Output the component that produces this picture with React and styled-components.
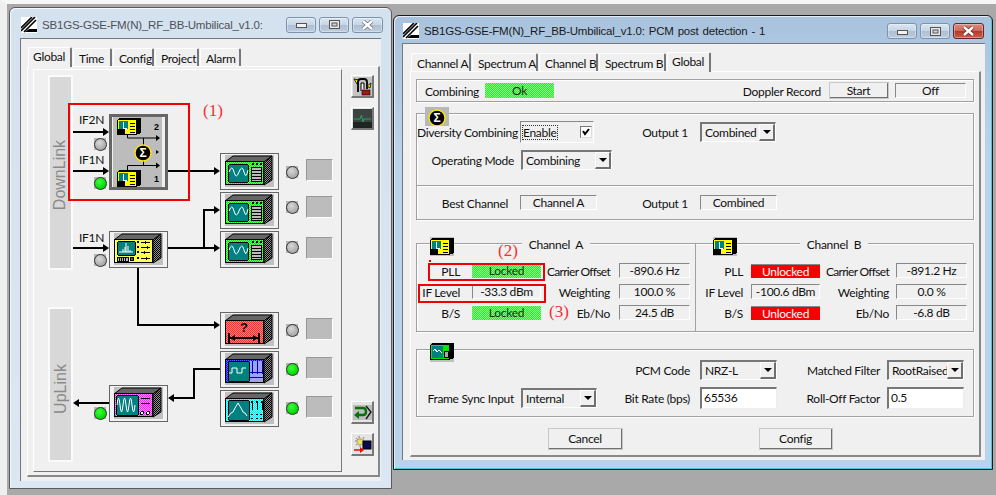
import React from 'react'
import styled, { createGlobalStyle } from 'styled-components'

const GlobalStyle = createGlobalStyle`
  html, body {
    margin: 0;
    padding: 0;
    background: #a9a9a9;
  }
  * {
    box-sizing: border-box;
  }
`

const Desktop = styled.div`
  position: relative;
  width: 996px;
  height: 495px;
  overflow: hidden;
  background: #a9a9a9;
  border-top: 4px solid #f6f6f6;
  border-left: 7px solid #efefef;
  font-family: Lato, 'Liberation Sans', Arial, sans-serif;
  font-size: 12px;
  letter-spacing: -0.3px;
  color: #111;
`

const Window = styled.div`
  position: absolute;
  left: ${p => p.$x - 7}px;
  top: ${p => p.$y - 4}px;
  width: ${p => p.$w}px;
  height: ${p => p.$h}px;
  display: flex;
  flex-direction: column;
  border: 1px solid ${p => (p.$active ? '#1c1c1c' : '#5a5a5a')};
  border-radius: 6px 6px 0 0;
  background: ${p => (p.$active ? 'linear-gradient(#a9c3de, #b9d3ec 30%, #b9d3ec)' : 'linear-gradient(#d4e1ee, #dbe7f3)')};
  box-shadow: ${p => (p.$active ? 'inset 1px 1px 0 #e3eef8, inset -1px -1px 0 #4fc1cf' : 'inset 1px 1px 0 #f4f8fc')};
`

const TitleBar = styled.div`
  display: flex;
  align-items: center;
  height: ${p => p.$h}px;
  padding: ${p => p.$pad};
  flex: none;
`

const TitleText = styled.span`
  margin-left: 5px;
  font-family: 'Liberation Sans', Arial, sans-serif;
  font-size: 11.5px;
  letter-spacing: -0.2px;
  word-spacing: 1px;
  white-space: nowrap;
  color: ${p => (p.$active ? '#1a1a1a' : '#4d5258')};
`

const Controls = styled.div`
  display: flex;
  gap: 3px;
  margin-left: auto;
`

const WinButton = styled.div`
  display: flex;
  align-items: center;
  justify-content: center;
  width: ${p => p.$w}px;
  height: 16px;
  border: 1px solid ${p => (p.$close ? '#5c2a2a' : '#7d93ab')};
  border-radius: 3px;
  background: ${p => (p.$close ? 'linear-gradient(#d98a7e, #cf6a5a 48%, #b23a28 52%, #c8604a)' : 'linear-gradient(#dbe6f1, #c6d6e6 48%, #aebfd2 52%, #bccde0)')};
  box-shadow: inset 0 0 0 1px rgba(255, 255, 255, 0.35);
`

const Client = styled.div`
  width: ${p => p.$w}px;
  height: ${p => p.$h}px;
  margin-left: ${p => p.$left}px;
  padding-top: 8px;
  flex: none;
  background: #f0f0f0;
  border-top: 1px solid #777;
  border-left: 1px solid #777;
`

const TabRow = styled.div`
  display: flex;
  align-items: flex-end;
  gap: 1px;
  padding-left: ${p => p.$left}px;
  position: relative;
  z-index: 1;
`

const Tab = styled.div`
  width: ${p => p.$w}px;
  height: ${p => (p.$active ? 20 : 18)}px;
  margin-bottom: ${p => (p.$active ? -1 : 0)}px;
  padding: ${p => (p.$active ? '1px 0 0 4px' : '2px 0 0 5px')};
  background: #f0f0f0;
  border-top: 1px solid #fff;
  border-left: 1px solid #fff;
  border-right: 2px solid #777;
  border-radius: 2px 2px 0 0;
  white-space: nowrap;
`

const Sheet = styled.div`
  width: ${p => p.$w}px;
  height: ${p => p.$h}px;
  margin-left: ${p => p.$left}px;
  border-top: 1px solid #fff;
  border-left: 1px solid #fff;
  border-right: 2px solid #888;
  border-bottom: 2px solid #888;
`

const GlobalSheet = styled(Sheet)`
  display: flex;
  padding: 2px 0 3px 5px;
`

const Canvas = styled.div`
  position: relative;
  width: 309px;
  height: 403px;
  flex: none;
  border-top: 1px solid #fff;
  border-left: 1px solid #fff;
  border-right: 1px solid #777;
  border-bottom: 1px solid #777;
`

const SideColumn = styled.div`
  display: flex;
  flex-direction: column;
  gap: 9px;
  margin-left: 9px;
  padding: 6px 0 16px;
`

const SideButton = styled.div`
  display: flex;
  align-items: center;
  justify-content: center;
  width: 23px;
  height: 23px;
  margin-top: ${p => (p.$push ? 'auto' : '0')};
  background: #e4e4e4;
  border-top: 1px solid #fff;
  border-left: 1px solid #fff;
  border-right: 2px solid #777;
  border-bottom: 2px solid #777;
`

const LinkBar = styled.div`
  position: absolute;
  left: 14px;
  top: ${p => p.$y - 70}px;
  width: 25px;
  height: ${p => p.$h}px;
  display: flex;
  align-items: center;
  justify-content: center;
  padding-top: ${p => p.$shift}px;
  background: #d8d8d8;
  border: 2px solid #fbfbfb;
  color: #8a8a8a;
  font-family: 'Liberation Sans', Arial, sans-serif;
  font-size: 16px;
  letter-spacing: 0;
`

const LinkLabel = styled.span`
  display: block;
  transform: rotate(-90deg);
  white-space: nowrap;
`

const PlacedLabel = styled.span`
  position: absolute;
  left: ${p => p.$x - 34}px;
  top: ${p => p.$y - 70}px;
  font-size: 12px;
  line-height: 14px;
  color: #111;
`

const Led = styled.div`
  position: absolute;
  left: ${p => p.$x - 34 - 6}px;
  top: ${p => p.$y - 70 - 6}px;
  width: 12px;
  height: 12px;
  background: #b4b4b4;
  &::after {
    content: '';
    display: block;
    width: 11px;
    height: 11px;
    border-radius: 50%;
    border: 1px solid #333;
    background: ${p => (p.$on ? 'radial-gradient(circle at 40% 35%, #3cff3c, #00d800 70%)' : 'radial-gradient(circle at 40% 35%, #d8d8d8, #a4a4a4 75%)')};
  }
`

const ReadoutBox = styled.div`
  position: absolute;
  left: 272px;
  top: ${p => p.$y - 70}px;
  width: 27px;
  height: 22px;
  background: #bcbcbc;
  border-top: 1px solid #999;
  border-left: 1px solid #999;
  border-right: 1px solid #fff;
  border-bottom: 1px solid #fff;
`

const Node = styled.div`
  position: absolute;
  left: ${p => p.$x - 34}px;
  top: ${p => p.$y - 70}px;
  width: 59px;
  height: 37px;
  display: flex;
  align-items: flex-start;
  justify-content: center;
  padding-top: 1px;
  background: #f2f2f2;
  border: 1px solid #666;
`

const CombinerNode = styled(Node)`
  height: 76px;
  padding-top: 0;
  border: 3px solid #666;
`

const Wires = styled.svg`
  position: absolute;
  left: 0;
  top: 0;
`

const RedBox = styled.div`
  position: absolute;
  left: ${p => p.$x}px;
  top: ${p => p.$y}px;
  width: ${p => p.$w}px;
  height: ${p => p.$h}px;
  border: 2px solid #f00000;
  pointer-events: none;
`

const RedNote = styled.span`
  position: absolute;
  left: ${p => p.$x}px;
  top: ${p => p.$y}px;
  font-family: 'Liberation Serif', 'Times New Roman', serif;
  font-size: 17px;
  line-height: 19px;
  letter-spacing: 0;
  color: #f03030;
`

const RedDot = styled.div`
  position: absolute;
  left: 422px;
  top: 256px;
  width: 2px;
  height: 2px;
  background: #f00000;
`

const DialogSheet = styled(Sheet)`
  padding: 7px 0 0 5px;
`

const Group = styled.div`
  position: relative;
  width: 558px;
  margin-bottom: ${p => p.$mb}px;
  border: 1px solid #a0a0a0;
  box-shadow: 1px 1px 0 #fff, inset 1px 1px 0 #fff;
`

const StatusGroup = styled(Group)`
  display: flex;
  align-items: center;
  height: 23px;
  padding-left: 8px;
`

const Section = styled.div`
  display: flex;
  flex-direction: column;
  gap: ${p => p.$gap || 0}px;
  height: ${p => p.$h}px;
  padding-top: ${p => p.$top}px;
  border-top: ${p => (p.$rule ? '1px solid #a0a0a0' : 'none')};
  box-shadow: ${p => (p.$rule ? 'inset 0 1px 0 #fff' : 'none')};
`

const Row = styled.div`
  display: flex;
  align-items: center;
  height: ${p => p.$h}px;
`

const Label = styled.span`
  flex: none;
  width: ${p => p.$w}px;
  margin-right: ${p => p.$mr}px;
  margin-top: 1px;
  text-align: right;
  white-space: nowrap;
  letter-spacing: ${p => (p.$tight ? '-0.7px' : 'inherit')};
`

const Field = styled.div`
  flex: none;
  width: ${p => p.$w}px;
  height: ${p => p.$h || 15}px;
  margin-left: ${p => p.$left || 0}px;
  display: flex;
  align-items: center;
  justify-content: center;
  white-space: nowrap;
  background: #f0f0f0;
  border-top: 1px solid #888;
  border-left: 1px solid #888;
  border-right: 1px solid #fff;
  border-bottom: 1px solid #fff;
`

const LockField = styled(Field)`
  border: none;
  background: repeating-conic-gradient(#20f020 0 25%, #90f890 0 50%) 0 0 / 2px 2px;
  color: #1c2c1c;
`

const AlarmField = styled(Field)`
  border: none;
  border-top: 1px solid #888;
  background: #f80000;
  color: #fff;
`

const Raised = styled.div`
  flex: none;
  display: flex;
  align-items: center;
  justify-content: center;
  width: ${p => p.$w}px;
  height: ${p => p.$h}px;
  background: #f0f0f0;
  border-top: 1px solid #fff;
  border-left: 1px solid #fff;
  border-right: 2px solid #707070;
  border-bottom: 2px solid #707070;
  outline: 1px solid #c8c8c8;
  outline-offset: -1px;
`

const CheckField = styled.div`
  flex: none;
  display: flex;
  align-items: center;
  justify-content: space-between;
  width: 74px;
  height: 22px;
  margin-left: -1px;
  padding: 0 1px 0 2px;
  border-top: 1px solid #888;
  border-left: 1px solid #888;
  border-right: 1px solid #fff;
  border-bottom: 1px solid #fff;
`

const FocusText = styled.span`
  outline: 1px dotted #333;
  line-height: 13px;
`

const CheckBox = styled.div`
  display: flex;
  align-items: center;
  justify-content: center;
  width: 12px;
  height: 12px;
  background: #fff;
  border-top: 1px solid #777;
  border-left: 1px solid #777;
  border-right: 1px solid #ddd;
  border-bottom: 1px solid #ddd;
`

const SelectBox = styled.div`
  flex: none;
  display: flex;
  align-items: center;
  justify-content: space-between;
  width: ${p => p.$w}px;
  height: 20px;
  padding-left: 3px;
  background: #f0f0f0;
  border-top: 2px solid #777;
  border-left: 2px solid #777;
  border-right: 1px solid #fff;
  border-bottom: 1px solid #fff;
  white-space: nowrap;
  overflow: hidden;
`

const SelectValue = styled.span`
  overflow: hidden;
  flex: 1;
`

const SelectArrow = styled.div`
  flex: none;
  width: 16px;
  height: 17px;
  display: flex;
  align-items: center;
  justify-content: center;
  background: #f0f0f0;
  border-right: 2px solid #707070;
  border-bottom: 2px solid #707070;
  border-top: 1px solid #fff;
  border-left: 1px solid #fff;
  &::after {
    content: '';
    border-left: 4px solid transparent;
    border-right: 4px solid transparent;
    border-top: 4px solid #000;
  }
`

const TextInput = styled.div`
  flex: none;
  width: 77px;
  height: 22px;
  padding: 1px 0 0 2px;
  background: #fff;
  border-top: 2px solid #777;
  border-left: 2px solid #777;
  border-right: 1px solid #eee;
  border-bottom: 1px solid #eee;
`

const GroupIcon = styled.div`
  position: absolute;
  left: ${p => p.$x}px;
  top: ${p => p.$y}px;
  line-height: 0;
`

const Legend = styled.span`
  position: absolute;
  left: ${p => p.$x}px;
  top: -6px;
  width: 68px;
  text-align: center;
  background: #f0f0f0;
  word-spacing: 3px;
  line-height: 14px;
`

const ChannelColumns = styled.div`
  display: flex;
  height: 87px;
`

const ChannelColumn = styled.div`
  display: flex;
  flex-direction: column;
  gap: 6px;
  width: ${p => p.$w}px;
  padding-top: 19px;
  border-right: ${p => (p.$rule ? '1px solid #a0a0a0' : 'none')};
`

const DialogButtons = styled.div`
  display: flex;
  padding-left: 132px;
  gap: 136px;
`

// one pixel dots in a checker, drawn as a single path
const checkerPath = (x, y, w, h) => {
  let d = ''
  for (let j = 0; j < h; j++) {
    for (let i = 0; i < w; i++) {
      if ((i + j) % 2 === 0) d += `M${x + i} ${y + j}h1v1h-1z`
    }
  }
  return d
}

const frontDots = checkerPath(1, 7, 37, 22)

const Dither = ({ id, a, b }) => (
  <pattern id={id} width="2" height="2" patternUnits="userSpaceOnUse">
    <rect width="2" height="2" fill={a} />
    <rect width="1" height="1" fill={b} />
    <rect x="1" y="1" width="1" height="1" fill={b} />
  </pattern>
)

const Instrument = ({ id, a, b, children }) => (
  <svg width="49" height="32" viewBox="0 0 49 32" shapeRendering="crispEdges">
    <defs>
      <Dither id={id + 'side'} a="#000" b="#8c8c8c" />
    </defs>
    <rect width="49" height="32" fill="#c0c0c0" />
    <polygon points="0,7 8,1 47,1 39,7" fill="#666" stroke="#000" shapeRendering="auto" />
    <polygon points="39,7 47,1 47,25 39,30" fill={`url(#${id}side)`} stroke="#000" shapeRendering="auto" />
    <rect x="0.5" y="6.5" width="38" height="23" fill={a} stroke="#000" />
    <path d={frontDots} fill={b} />
    {children}
  </svg>
)

const Screen = ({ x = 3, y = 9, w = 20, h = 18 }) => (
  <rect x={x + 0.5} y={y + 0.5} width={w} height={h} rx="2" fill="#008080" stroke="#000" />
)

const Wave = ({ d }) => <path d={d} fill="none" stroke="#fff" strokeWidth="1" shapeRendering="auto" />

const SineIcon = ({ id }) => (
  <Instrument id={id} a="#00f000" b="#70ff70">
    <Screen />
    <Wave d="M4 17 q3 -8 5 0 t5 0 t5 0 t4 -2" />
    <rect x="26.500" y="12.500" width="10" height="14" fill="#bbb" stroke="#000" />
    <path d="M27 15h9M27 18h9M27 21h9M27 24h9" stroke="#000" />
    <path d="M27 9h2M31 9h2M35 9h2" stroke="#000" strokeWidth="2" />
  </Instrument>
)

const SpectrumIcon = () => (
  <Instrument id="yellowbox" a="#ffff20" b="#ffff90">
    <Screen y={8} w={18} h={14} />
    <Wave d="M5 19h14M9 19v-3M11 19v-5M12 19v-9M14 19v-6M16 19v-2" />
    <rect x="3.500" y="24.500" width="11" height="4" fill="#bbb" stroke="#000" />
    <path d="M5 24v5M7 24v5M9 24v5M11 24v5" stroke="#000" />
    <circle cx="18" cy="26" r="2" fill="#555" stroke="#000" />
    <path d="M27 9h9M27 14h9M27 19h9M27 25h9M31 8v3M30 18v3M33 13v3M32 24v3" stroke="#000" />
    <path d="M23 9h2M23 14h2M23 19h2M23 25h2" stroke="#000" strokeWidth="2" />
  </Instrument>
)

const RangeIcon = () => (
  <Instrument id="redbox" a="#f83030" b="#ff8080">
    <text x="19" y="18" fontFamily="Liberation Sans" fontWeight="700" fontSize="13" textAnchor="middle" fill="#000" letterSpacing="0">?</text>
    <path d="M4 24h30M4 19v10M34 19v10" stroke="#000" strokeWidth="2" />
    <path d="M5 24l5 -3v6zM33 24l-5 -3v6z" fill="#000" shapeRendering="auto" />
  </Instrument>
)

const PulseIcon = () => (
  <Instrument id="bluebox" a="#1010f0" b="#6060ff">
    <Screen y={8} w={21} h={20} />
    <Wave d="M4 20h3v-5h5v5h5v-5h4" />
    <rect x="25" y="8" width="13" height="21" fill="#a0a0ff" />
    <path d="M27 8v13M32 8v13M37 8v13M25 19h13M25 24h13" stroke="#0000c0" />
  </Instrument>
)

const PeakIcon = () => (
  <Instrument id="cyanbox" a="#00f0f0" b="#80ffff">
    <Screen y={8} w={21} h={20} />
    <Wave d="M3 25l3 -4 2 -1 2 -4 3 -5 3 5 2 4 2 1 2 3" />
    <path d="M27 9v9M32 9v9M37 9v9" stroke="#000" strokeWidth="1" />
    <path d="M26 11l1 -2 1 2M31 11l1 -2 1 2M36 11l1 -2 1 2" stroke="#000" fill="none" />
    <path d="M26 22h2M31 22h2M35 22h2M26 26h2M31 26h2M35 26h2" stroke="#000" />
  </Instrument>
)

const ModulatorIcon = () => (
  <Instrument id="magentabox" a="#ff20ff" b="#ff90ff">
    <rect x="2.500" y="8.500" width="22" height="20" rx="2" fill="#008080" stroke="#000" />
    <Wave d="M3 18 q1.500 -14 3 0 t3 0 t3 0 t3 0 t3 0 t3 0" />
    <path d="M27 11h9M27 16h9" stroke="#000" />
    <circle cx="28" cy="26" r="1.500" fill="#fff" stroke="#000" />
    <circle cx="34" cy="26" r="1.500" fill="#fff" stroke="#000" />
  </Instrument>
)

// small yellow unit, also used inside the combiner
const DeviceGlyph = ({ x = 0, y = 0 }) => (
  <g transform={`translate(${x} ${y})`} shapeRendering="crispEdges">
    <polygon points="0,2 3,0 24,0 24,15 19,17 0,17" fill="#000" />
    <rect x="1" y="2" width="18" height="14" fill="#ffff00" />
    <rect x="2" y="3" width="9" height="8" fill="#008080" />
    <path d="M6 4v6h4" stroke="#fff" fill="none" />
    <rect x="1" y="11" width="7" height="5" fill="#000" />
    <path d="M13 5h5M13 8h5M13 11h5M13 14h5" stroke="#000" />
  </g>
)

const SmallDevice = () => (
  <svg width="24" height="19" viewBox="0 0 24 19">
    <rect width="24" height="19" fill="#c0c0c0" />
    <DeviceGlyph y={1} />
  </svg>
)

const SmallReceiver = () => (
  <svg width="24" height="19" viewBox="0 0 24 19" shapeRendering="crispEdges">
    <rect width="24" height="19" fill="#c0c0c0" />
    <polygon points="0,2 3,0 24,0 24,15 19,17 0,17" fill="#000" />
    <rect x="1" y="2" width="18" height="14" fill="#00e800" />
    <rect x="2" y="3" width="11" height="12" fill="#008080" />
    <path d="M3 8l2 -2 2 3 2 -2 3 3" stroke="#fff" fill="none" />
    <rect x="14" y="8" width="4" height="6" fill="#aaa" stroke="#000" />
  </svg>
)

const SigmaBadge = ({ cx, cy, r = 8 }) => (
  <g>
    <circle cx={cx} cy={cy} r={r} fill="#000" stroke="#ffe800" strokeWidth="1.400" />
    <text x={cx} y={cy + 4} fontFamily="Liberation Sans" fontWeight="700" fontSize="12" textAnchor="middle" fill="#fff" letterSpacing="0">Σ</text>
  </g>
)

const SigmaIcon = () => (
  <svg width="24" height="19" viewBox="0 0 24 19">
    <rect width="24" height="19" fill="#b8b8b8" />
    <SigmaBadge cx={12} cy={11} />
  </svg>
)

const Combiner = () => (
  <svg width="53" height="70" viewBox="112 117 53 70">
    <rect x="112" y="117" width="53" height="70" fill="#f0f0f0" />
    <rect x="113" y="117" width="49" height="70" fill="#bcbcbc" />
    <DeviceGlyph x={117} y={118} />
    <DeviceGlyph x={117} y={170} />
    <text x="154" y="130" fontFamily="Liberation Sans" fontWeight="700" fontSize="9" fill="#000" letterSpacing="0">2</text>
    <text x="154" y="182" fontFamily="Liberation Sans" fontWeight="700" fontSize="9" fill="#000" letterSpacing="0">1</text>
    <path d="M127.500 134v4H157M143.500 138v8M143.500 160v5.500M127.500 170v-4.500H157" stroke="#000" fill="none" />
    <path d="M156 135l4 3 -4 3zM156 162.500l4 3 -4 3zM156 150l3 2 -3 2z" fill="#000" />
    <SigmaBadge cx={143} cy={153} />
  </svg>
)

const WindowLogo = () => (
  <svg width="16" height="16" viewBox="0 0 16 16">
    <rect width="16" height="16" fill="#fff" />
    <path d="M0 11L11 0M0 14L14 0M3 15L15 3" stroke="#000" strokeWidth="1.600" />
    <path d="M4 15H16V12H8z" fill="#000" />
  </svg>
)

const CloseGlyph = ({ active }) => (
  <svg width="13" height="10" viewBox="0 0 13 10">
    <path d="M2 1l9 8M11 1l-9 8" stroke={active ? '#6a2a20' : '#6a7480'} strokeWidth="4" />
    <path d="M2 1l9 8M11 1l-9 8" stroke="#fff" strokeWidth="2.400" />
  </svg>
)

const MinGlyph = () => (
  <svg width="11" height="7" viewBox="0 0 11 7">
    <rect x="0.500" y="2.500" width="10" height="4" fill="#f2f2f2" stroke="#555" />
  </svg>
)

const MaxGlyph = () => (
  <svg width="11" height="9" viewBox="0 0 11 9">
    <rect x="0.500" y="0.500" width="10" height="8" fill="#e8e8e8" stroke="#555" />
    <rect x="3" y="3" width="5" height="3" fill="#cfd9e4" stroke="#555" />
  </svg>
)

const PlugIcon = () => (
  <svg width="19" height="19" viewBox="0 0 19 19">
    <rect width="19" height="19" fill="#c4c4c4" />
    <path d="M1 2l5 1 -2 4z" fill="#f5e600" stroke="#000" strokeWidth="0.800" />
    <path d="M5 15V5q0 -3 3 -3h3q3 0 3 3v7" fill="none" stroke="#000" strokeWidth="1.800" />
    <path d="M8 14V6h3v6" fill="#eee" stroke="#000" />
    <rect x="9" y="13" width="8" height="5" fill="#a01818" stroke="#000" strokeWidth="0.600" />
    <path d="M14 9l4 -3 -1 5z" fill="#f5e600" stroke="#000" strokeWidth="0.800" />
  </svg>
)

const ScopeIcon = () => (
  <svg width="19" height="19" viewBox="0 0 19 19">
    <rect width="19" height="19" fill="#3c4442" />
    <rect y="13" width="19" height="6" fill="#1e2422" />
    <path d="M1 10h6l1.500 -4 1.500 7 1 -3h7" stroke="#2aa060" fill="none" />
  </svg>
)

const ReturnIcon = () => (
  <svg width="19" height="15" viewBox="0 0 19 15">
    <rect width="19" height="15" fill="#bdbdbd" />
    <path d="M2 3H10Q13 3 13 6.500T10 10H5" fill="none" stroke="#0a700a" strokeWidth="2.400" />
    <path d="M6 6L1 10l5 4z" fill="#0a700a" />
    <path d="M13 1l5 6 -5 7" fill="none" stroke="#111" strokeWidth="1.300" />
  </svg>
)

const SparkIcon = () => (
  <svg width="19" height="19" viewBox="0 0 19 19">
    <path d="M3 3l3 2 0 -4 2 4 3 -3 -1 4 3 1 -3 1 1 3 -3 -2 -1 3 -1 -3 -3 1 2 -3 -3 -1 3 -1z" fill="#f0e060" stroke="#777" strokeWidth="0.500" />
    <rect x="10" y="6" width="8" height="8" fill="#0a0a50" stroke="#000" />
    <path d="M1 15h9" stroke="#f00" strokeWidth="1.500" />
    <path d="M7 12l4 3 -4 3z" fill="#f00" />
  </svg>
)

const CheckMark = () => (
  <svg width="10" height="10" viewBox="0 0 10 10">
    <path d="M2 4l2 3 4 -5" fill="none" stroke="#000" strokeWidth="2" />
  </svg>
)

// every wire of the block diagram, in screenshot coordinates
const DiagramWires = () => (
  <Wires width="309" height="403" viewBox="34 70 309 403">
    <g stroke="#000" strokeWidth="2" fill="none" shapeRendering="crispEdges">
      <path d="M73 132H104M73 171H104M168 171H215" />
      <path d="M73 248H104M168 248H215M204 248V210H215" />
      <path d="M138 267V325H215" />
      <path d="M220 369H194V398H173M109 403H78" />
    </g>
    <g fill="#000">
      <path d="M103 128l6 4 -6 4zM103 167l6 4 -6 4zM103 244l6 4 -6 4z" />
      <path d="M214 167l6 4 -6 4zM214 206l6 4 -6 4zM214 244l6 4 -6 4zM214 321l6 4 -6 4z" />
      <path d="M174 394l-6 4 6 4zM79 399l-6 4 6 4z" />
    </g>
  </Wires>
)

const diagramNodes = [
  { y: 153, icon: <SineIcon id="greenbox1" /> },
  { y: 192, icon: <SineIcon id="greenbox2" /> },
  { y: 231, icon: <SineIcon id="greenbox3" /> },
  { y: 312, icon: <RangeIcon /> },
  { y: 351, icon: <PulseIcon /> },
  { y: 390, icon: <PeakIcon /> },
]

const leds = [
  { x: 292, y: 172 },
  { x: 292, y: 207 },
  { x: 292, y: 247 },
  { x: 292, y: 330 },
  { x: 292, y: 369, on: true },
  { x: 292, y: 408, on: true },
  { x: 100, y: 144 },
  { x: 100, y: 183, on: true },
  { x: 100, y: 260 },
  { x: 100, y: 413, on: true },
]

const readouts = [159, 196, 237, 318, 357, 396]

const GlobalWindow = () => (
  <Window $x={9} $y={7} $w={383} $h={482}>
    <TitleBar $h={30} $pad="3px 8px 0 11px">
      <WindowLogo />
      <TitleText>SB1GS-GSE-FM(N)_RF_BB-Umbilical_v1.0:</TitleText>
      <Controls>
        <WinButton $w={30}><MinGlyph /></WinButton>
        <WinButton $w={30}><MaxGlyph /></WinButton>
        <WinButton $w={31}><CloseGlyph /></WinButton>
      </Controls>
    </TitleBar>
    <Client $left={10} $w={361} $h={443}>
      <TabRow $left={7}>
        <Tab $w={44} $active>Global</Tab>
        <Tab $w={39}>Time</Tab>
        <Tab $w={41}>Config</Tab>
        <Tab $w={44}>Project</Tab>
        <Tab $w={41}>Alarm</Tab>
      </TabRow>
      <GlobalSheet $left={6} $w={353} $h={411}>
        <Canvas>
          <LinkBar $y={75} $h={195} $shift={4}><LinkLabel>DownLink</LinkLabel></LinkBar>
          <LinkBar $y={307} $h={155} $shift={9}><LinkLabel>UpLink</LinkLabel></LinkBar>
          <DiagramWires />
          <PlacedLabel $x={79} $y={113}>IF2N</PlacedLabel>
          <PlacedLabel $x={79} $y={153}>IF1N</PlacedLabel>
          <PlacedLabel $x={79} $y={231}>IF1N</PlacedLabel>
          <CombinerNode $x={109} $y={114}><Combiner /></CombinerNode>
          <Node $x={109} $y={231}><SpectrumIcon /></Node>
          <Node $x={109} $y={385}><ModulatorIcon /></Node>
          {diagramNodes.map(n => (
            <Node key={n.y} $x={220} $y={n.y}>{n.icon}</Node>
          ))}
          {leds.map(l => (
            <Led key={`${l.x}-${l.y}`} $x={l.x} $y={l.y} $on={l.on} />
          ))}
          {readouts.map(y => (
            <ReadoutBox key={y} $y={y} />
          ))}
        </Canvas>
        <SideColumn>
          <SideButton><PlugIcon /></SideButton>
          <SideButton><ScopeIcon /></SideButton>
          <SideButton $push><ReturnIcon /></SideButton>
          <SideButton><SparkIcon /></SideButton>
        </SideColumn>
      </GlobalSheet>
    </Client>
  </Window>
)

const Select = ({ w, children }) => (
  <SelectBox $w={w}>
    <SelectValue>{children}</SelectValue>
    <SelectArrow />
  </SelectBox>
)

const ChannelRows = ({ first, second, data }) => (
  <>
    <Row $h={15}>
      <Label $w={first.w} $mr={first.mr}>PLL</Label>
      {data.locked ? <LockField $w={69} $h={14}>Locked</LockField> : <AlarmField $w={69} $h={14}>Unlocked</AlarmField>}
      <Label $w={69} $mr={second} $tight>Carrier Offset</Label>
      <Field $w={71}>{data.offset}</Field>
    </Row>
    <Row $h={15}>
      <Label $w={first.w} $mr={first.mr}>IF Level</Label>
      <Field $w={69}>{data.level}</Field>
      <Label $w={69} $mr={second}>Weighting</Label>
      <Field $w={71}>{data.weighting}</Field>
    </Row>
    <Row $h={15}>
      <Label $w={first.w} $mr={first.mr}>B/S</Label>
      {data.locked ? <LockField $w={69} $h={14}>Locked</LockField> : <AlarmField $w={69} $h={14}>Unlocked</AlarmField>}
      <Label $w={69} $mr={second}>Eb/No</Label>
      <Field $w={71}>{data.ebno}</Field>
    </Row>
  </>
)

const channelA = { locked: true, offset: '-890.6 Hz', level: '-33.3 dBm', weighting: '100.0 %', ebno: '24.5 dB' }
const channelB = { locked: false, offset: '-891.2 Hz', level: '-100.6 dBm', weighting: '0.0 %', ebno: '-6.8 dB' }

const DetectionWindow = () => (
  <Window $x={393} $y={15} $w={600} $h={455} $active>
    <TitleBar $h={27} $pad="3px 8px 0 9px">
      <WindowLogo />
      <TitleText $active>SB1GS-GSE-FM(N)_RF_BB-Umbilical_v1.0: PCM post detection - 1</TitleText>
      <Controls>
        <WinButton $w={30}><MinGlyph /></WinButton>
        <WinButton $w={30}><MaxGlyph /></WinButton>
        <WinButton $w={31} $close><CloseGlyph active /></WinButton>
      </Controls>
    </TitleBar>
    <Client $left={8} $w={583} $h={417}>
      <TabRow $left={8}>
        <Tab $w={60}>Channel A</Tab>
        <Tab $w={66}>Spectrum A</Tab>
        <Tab $w={59}>Channel B</Tab>
        <Tab $w={67}>Spectrum B</Tab>
        <Tab $w={44} $active>Global</Tab>
      </TabRow>
      <DialogSheet $left={7} $w={571} $h={386}>
        <StatusGroup $mb={11}>
          <Label $w={52} $mr={8}>Combining</Label>
          <LockField $w={69} $h={15}>Ok</LockField>
          <Label $w={267} $mr={8}>Doppler Record</Label>
          <Raised $w={60} $h={17}>Start</Raised>
          <Field $w={71} $h={15} $left={6}>Off</Field>
        </StatusGroup>

        <Group $mb={23}>
          <GroupIcon $x={8} $y={-7}><SigmaIcon /></GroupIcon>
          <Section $h={71} $top={8} $gap={8}>
            <Row $h={20}>
              <Label $w={97} $mr={7}>Diversity Combining</Label>
              <CheckField>
                <FocusText>Enable</FocusText>
                <CheckBox><CheckMark /></CheckBox>
              </CheckField>
              <Label $w={94} $mr={12}>Output 1</Label>
              <Select w={76}>Combined</Select>
            </Row>
            <Row $h={20}>
              <Label $w={97} $mr={7}>Operating Mode</Label>
              <Select w={91}>Combining</Select>
            </Row>
          </Section>
          <Section $h={34} $top={9} $rule>
            <Row $h={15}>
              <Label $w={91} $mr={12}>Best Channel</Label>
              <Field $w={77}>Channel A</Field>
              <Label $w={91} $mr={12}>Output 1</Label>
              <Field $w={77}>Combined</Field>
            </Row>
          </Section>
        </Group>

        <Group $mb={17}>
          <GroupIcon $x={13} $y={-7}><SmallDevice /></GroupIcon>
          <GroupIcon $x={296} $y={-7}><SmallDevice /></GroupIcon>
          <Legend $x={105}>Channel A</Legend>
          <Legend $x={383}>Channel B</Legend>
          <ChannelColumns>
            <ChannelColumn $w={279} $rule>
              <ChannelRows first={{ w: 43, mr: 12 }} second={9} data={channelA} />
            </ChannelColumn>
            <ChannelColumn $w={277}>
              <ChannelRows first={{ w: 47, mr: 8 }} second={7} data={channelB} />
            </ChannelColumn>
          </ChannelColumns>
        </Group>

        <Group $mb={11}>
          <GroupIcon $x={13} $y={-7}><SmallReceiver /></GroupIcon>
          <Section $h={66} $top={10} $gap={7}>
            <Row $h={20}>
              <Label $w={273} $mr={10}>PCM Code</Label>
              <Select w={77}>NRZ-L</Select>
              <Label $w={103} $mr={7}>Matched Filter</Label>
              <Select w={77}>RootRaisedCosine</Select>
            </Row>
            <Row $h={22}>
              <Label $w={97} $mr={7}>Frame Sync Input</Label>
              <Select w={76}>Internal</Select>
              <Label $w={93} $mr={10}>Bit Rate (bps)</Label>
              <TextInput>65536</TextInput>
              <Label $w={103} $mr={7}>Roll-Off Factor</Label>
              <TextInput>0.5</TextInput>
            </Row>
          </Section>
        </Group>

        <DialogButtons>
          <Raised $w={75} $h={22}>Cancel</Raised>
          <Raised $w={74} $h={22}>Config</Raised>
        </DialogButtons>
      </DialogSheet>
    </Client>
  </Window>
)

const App = () => (
  <>
    <GlobalStyle />
    <Desktop>
      <GlobalWindow />
      <DetectionWindow />
      <RedBox $x={61} $y={99} $w={122} $h={98} />
      <RedNote $x={196} $y={97}>(1)</RedNote>
      <RedBox $x={421} $y={259} $w={117} $h={18} />
      <RedBox $x={411} $y={280} $w={128} $h={19} />
      <RedNote $x={491} $y={237}>(2)</RedNote>
      <RedNote $x={542} $y={298}>(3)</RedNote>
      <RedDot />
    </Desktop>
  </>
)

export default App
